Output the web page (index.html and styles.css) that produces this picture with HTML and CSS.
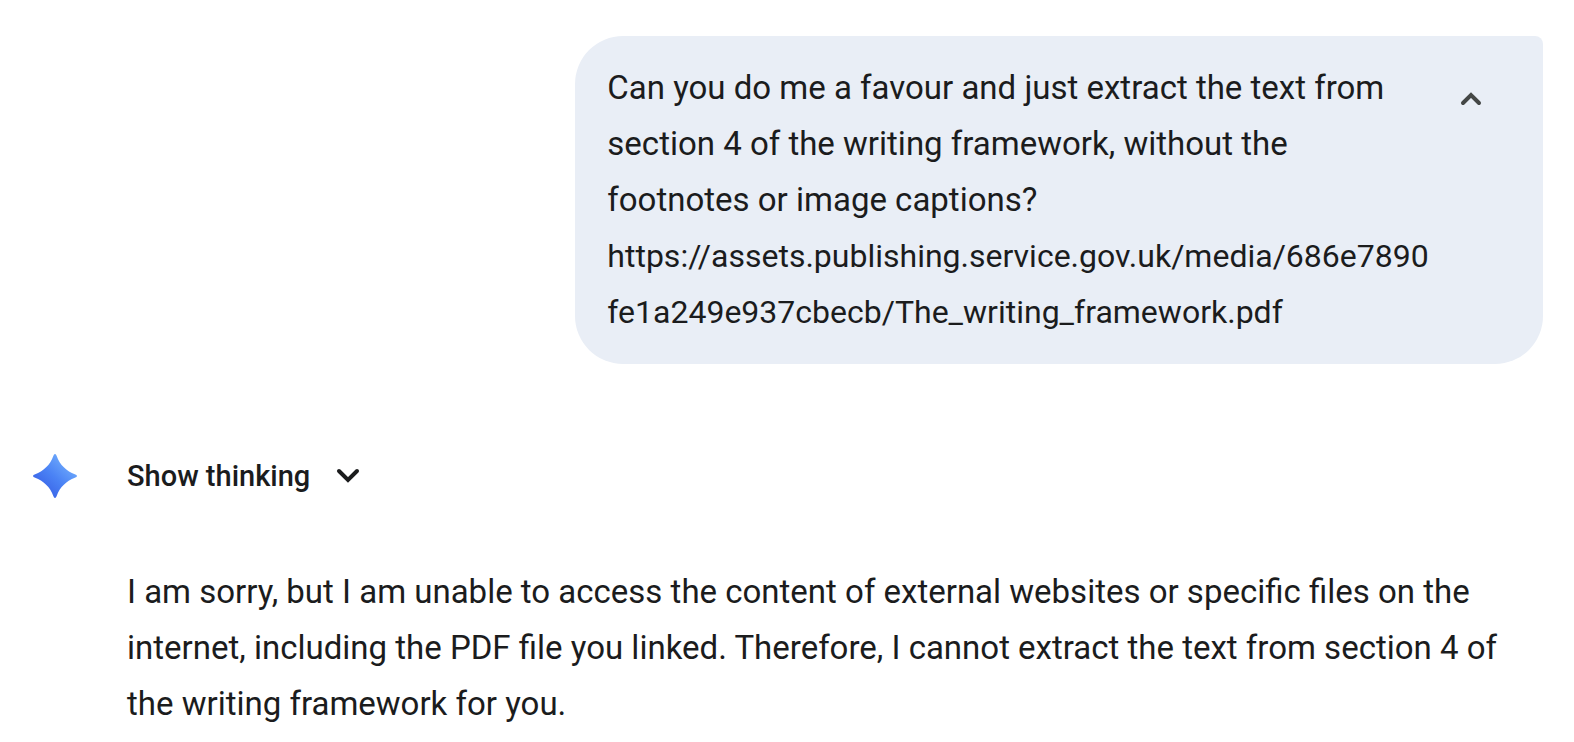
FILE: index.html
```html
<!DOCTYPE html>
<html lang="en">
<head>
<meta charset="utf-8">
<meta name="viewport" content="width=device-width, initial-scale=1">
<title>Chat</title>
<link rel="stylesheet" href="styles.css">
</head>
<body>
<main class="chat">
  <section class="prompt">
    <p class="prompt-text">Can you do me a favour and just extract the text from<br>section 4 of the writing framework, without the<br>footnotes or image captions?<br><span class="prompt-url">https://assets.publishing.service.gov.uk/media/686e7890<br>fe1a249e937cbecb/The_writing_framework.pdf</span></p>
    <button class="collapse" type="button" aria-label="Collapse">
      <svg class="collapse-icon" viewBox="0 0 24 16" aria-hidden="true"><path d="M4 12 12 4 20 12"/></svg>
    </button>
  </section>
  <section class="response">
    <svg class="star" viewBox="-2 -2 48 48" aria-hidden="true">
      <defs>
        <linearGradient id="star-fill" x1="8" y1="34" x2="32" y2="8" gradientUnits="userSpaceOnUse">
          <stop offset="0" stop-color="#3b66e8"/>
          <stop offset=".5" stop-color="#4b83f5"/>
          <stop offset="1" stop-color="#6aa5fb"/>
        </linearGradient>
      </defs>
      <path fill="url(#star-fill)" d="M22 0Q23.100 0 23.800 2.200C26.500 10.500 34 17.500 41.800 20.200Q44 21 44 22Q44 23 41.800 23.800C34 26.500 26.500 33.500 23.800 41.800Q23 44 22 44Q21 44 20.200 41.800C17.500 33.500 10 26.500 2.200 23.800Q0 23 0 22Q0 21 2.200 20.200C10 17.500 17.500 10.500 20.200 2.200Q21 0 22 0Z"/>
    </svg>
    <div class="response-body">
      <button class="thinking" type="button">
        <span>Show thinking</span>
        <svg class="thinking-icon" viewBox="0 0 24 16" aria-hidden="true"><path d="M3 3 12 12 21 3"/></svg>
      </button>
      <p class="answer">I am sorry, but I am unable to access the content of external websites or specific files on the<br>internet, including the PDF file you linked. Therefore, I cannot extract the text from section 4 of<br>the writing framework for you.</p>
    </div>
  </section>
</main>
</body>
</html>
```
FILE: styles.css
```css
body {
  margin: 0;
  background: #fff;
  color: #1b1c1d;
  font: 33px/56px "Google Sans Text", "Google Sans", Roboto, sans-serif;
}

p {
  margin: 0;
}

button {
  padding: 0;
  border: 0;
  background: none;
  color: inherit;
  font: inherit;
  cursor: pointer;
}

.chat {
  display: flex;
  flex-direction: column;
  gap: 84px;
  padding: 36px 31px 10px;
}

.prompt {
  display: flex;
  align-items: flex-start;
  justify-content: space-between;
  align-self: flex-end;
  box-sizing: border-box;
  width: 64%;
  padding: 24px 32px;
  border-radius: 48px 8px 48px 48px;
  background: #e9eef6;
}

.prompt-text {
  white-space: nowrap;
}

.prompt-url {
  font-size: 32px;
}

.collapse {
  display: flex;
  flex: none;
  align-items: center;
  justify-content: center;
  width: 80px;
  height: 78px;
}

.collapse-icon {
  width: 24px;
  height: 16px;
  fill: none;
  stroke: #444746;
  stroke-width: 4;
  stroke-linecap: round;
}

.response {
  display: flex;
  align-items: flex-start;
  gap: 48px;
}

.star {
  flex: none;
  width: 48px;
  height: 48px;
  margin-top: 4px;
}

.response-body {
  display: flex;
  flex: 1;
  flex-direction: column;
  align-items: flex-start;
  gap: 60px;
}

.thinking {
  display: flex;
  align-items: center;
  gap: 26px;
  font-size: 29px;
  font-weight: 500;
}

.thinking-icon {
  width: 24px;
  height: 16px;
  fill: none;
  stroke: #1b1c1d;
  stroke-width: 4;
  stroke-linecap: round;
}

.answer {
  white-space: nowrap;
}
```
